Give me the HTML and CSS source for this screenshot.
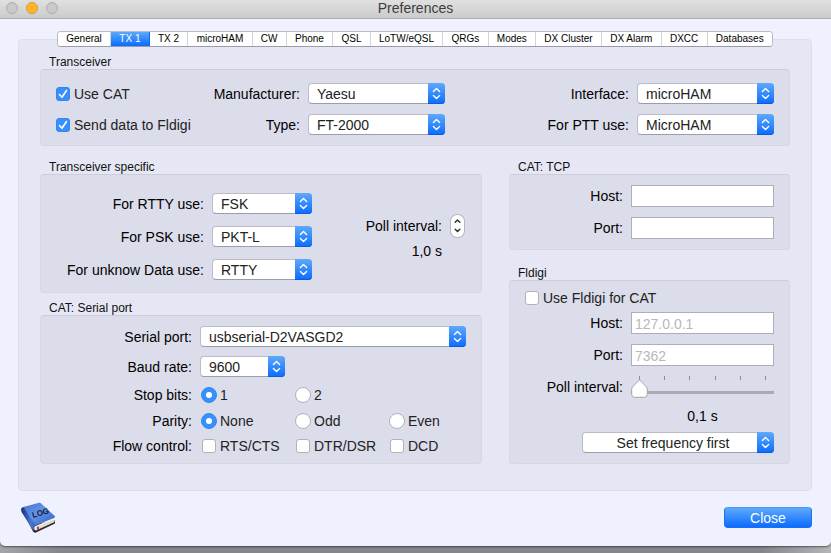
FILE: index.html
```html
<!DOCTYPE html>
<html lang="en">
<head>
<meta charset="utf-8">
<title>Preferences</title>
<link rel="stylesheet" href="styles.css">
</head>
<body>
<svg class="defs" aria-hidden="true">
  <symbol id="updown" viewBox="0 0 17 21">
    <path d="M5.4 8.6 8.5 5.6l3.1 3M5.4 12.6l3.1 3 3.1-3" fill="none" stroke="#fff" stroke-width="1.4" stroke-linecap="round" stroke-linejoin="round"/>
  </symbol>
</svg>
<div class="window">
  <header class="titlebar">
    <div class="lights">
      <button class="light" aria-label="Close window"></button>
      <button class="light light-min" aria-label="Minimize"></button>
      <button class="light" aria-label="Zoom"></button>
    </div>
    <h1 class="title">Preferences</h1>
  </header>

  <main class="content">
    <nav class="tabs" role="tablist">
      <button class="tab" role="tab">General</button>
      <button class="tab tab-on" role="tab" aria-selected="true">TX 1</button>
      <button class="tab" role="tab">TX 2</button>
      <button class="tab" role="tab">microHAM</button>
      <button class="tab" role="tab">CW</button>
      <button class="tab" role="tab">Phone</button>
      <button class="tab" role="tab">QSL</button>
      <button class="tab" role="tab">LoTW/eQSL</button>
      <button class="tab" role="tab">QRGs</button>
      <button class="tab" role="tab">Modes</button>
      <button class="tab" role="tab">DX Cluster</button>
      <button class="tab" role="tab">DX Alarm</button>
      <button class="tab" role="tab">DXCC</button>
      <button class="tab" role="tab">Databases</button>
    </nav>

    <div class="panel">
      <fieldset class="group">
        <legend>Transceiver</legend>
        <div class="box transceiver">
          <label class="choice"><input type="checkbox" checked>Use CAT</label>
          <label class="name" for="maker">Manufacturer:</label>
          <span class="popup"><select id="maker"><option>Yaesu</option></select><svg class="arrows"><use href="#updown"/></svg></span>
          <label class="name" for="iface">Interface:</label>
          <span class="popup"><select id="iface"><option>microHAM</option></select><svg class="arrows"><use href="#updown"/></svg></span>
          <label class="choice"><input type="checkbox" checked>Send data to Fldigi</label>
          <label class="name" for="type">Type:</label>
          <span class="popup"><select id="type"><option>FT-2000</option></select><svg class="arrows"><use href="#updown"/></svg></span>
          <label class="name" for="ptt">For PTT use:</label>
          <span class="popup"><select id="ptt"><option>MicroHAM</option></select><svg class="arrows"><use href="#updown"/></svg></span>
        </div>
      </fieldset>

      <div class="columns">
        <div class="column">
          <fieldset class="group">
            <legend>Transceiver specific</legend>
            <div class="box specific">
              <div class="modes">
                <label class="name" for="rtty">For RTTY use:</label>
                <span class="popup"><select id="rtty"><option>FSK</option></select><svg class="arrows"><use href="#updown"/></svg></span>
                <label class="name" for="psk">For PSK use:</label>
                <span class="popup"><select id="psk"><option>PKT-L</option></select><svg class="arrows"><use href="#updown"/></svg></span>
                <label class="name" for="data">For unknow Data use:</label>
                <span class="popup"><select id="data"><option>RTTY</option></select><svg class="arrows"><use href="#updown"/></svg></span>
              </div>
              <div class="poll">
                <span class="name">Poll interval:</span>
                <button class="stepper" aria-label="Change poll interval">
                  <svg viewBox="0 0 13 22" width="13" height="22"><path d="M4.200 7.300 6.500 5l2.300 2.300M4.200 14.200l2.300 2.300 2.300-2.300" fill="none" stroke="#333" stroke-width="1.500" stroke-linecap="round" stroke-linejoin="round"/></svg>
                </button>
                <output class="name">1,0 s</output>
              </div>
            </div>
          </fieldset>

          <fieldset class="group">
            <legend>CAT: Serial port</legend>
            <div class="box serial">
              <label class="name" for="port">Serial port:</label>
              <span class="popup wide"><select id="port"><option>usbserial-D2VASGD2</option></select><svg class="arrows"><use href="#updown"/></svg></span>
              <label class="name" for="baud">Baud rate:</label>
              <span class="popup baud"><select id="baud"><option>9600</option></select><svg class="arrows"><use href="#updown"/></svg></span>
              <span class="name">Stop bits:</span>
              <label class="choice"><input type="radio" name="stop" checked>1</label>
              <label class="choice"><input type="radio" name="stop">2</label>
              <span class="name row-start">Parity:</span>
              <label class="choice"><input type="radio" name="parity" checked>None</label>
              <label class="choice"><input type="radio" name="parity">Odd</label>
              <label class="choice"><input type="radio" name="parity">Even</label>
              <span class="name row-start">Flow control:</span>
              <label class="choice"><input type="checkbox">RTS/CTS</label>
              <label class="choice"><input type="checkbox">DTR/DSR</label>
              <label class="choice"><input type="checkbox">DCD</label>
            </div>
          </fieldset>
        </div>

        <div class="column column-right">
          <fieldset class="group">
            <legend>CAT: TCP</legend>
            <div class="box tcp">
              <label class="name" for="host">Host:</label>
              <input class="field" type="text" id="host">
              <label class="name" for="tcpport">Port:</label>
              <input class="field" type="text" id="tcpport">
            </div>
          </fieldset>

          <fieldset class="group">
            <legend>Fldigi</legend>
            <div class="box fldigi">
              <label class="choice"><input type="checkbox">Use Fldigi for CAT</label>
              <div class="fields">
                <label class="name" for="fhost">Host:</label>
                <input class="field" type="text" id="fhost" placeholder="127.0.0.1">
                <label class="name" for="fport">Port:</label>
                <input class="field" type="text" id="fport" placeholder="7362">
                <label class="name" for="fpoll">Poll interval:</label>
                <div class="slider">
                  <div class="ticks"><i></i><i></i><i></i><i></i><i></i><i></i></div>
                  <input type="range" id="fpoll" min="0" max="5" value="0">
                </div>
                <output class="reading" for="fpoll">0,1 s</output>
              </div>
              <span class="popup order"><select aria-label="Order"><option>Set frequency first</option></select><svg class="arrows"><use href="#updown"/></svg></span>
            </div>
          </fieldset>
        </div>
      </div>
    </div>

    <footer class="footer">
      <svg class="book" viewBox="0 0 36 32" width="36" height="32" role="img" aria-label="Log book">
        <defs>
          <linearGradient id="cover" x1="0" y1="0" x2="1" y2="1"><stop offset="0" stop-color="#3f72cf"/><stop offset=".45" stop-color="#6494ea"/><stop offset="1" stop-color="#2f5fc0"/></linearGradient>
          <linearGradient id="spine" x1="0" y1="0" x2="1" y2="0"><stop offset="0" stop-color="#16306f"/><stop offset=".6" stop-color="#4778d2"/><stop offset="1" stop-color="#2854ac"/></linearGradient>
        </defs>
        <path d="M1 8 12 29.500q1 1.500 3 1L34 21.500v-3L14 22z" fill="#23262f"/>
        <path d="M13 24.500 33 16.500l.5 3.500L15 28.500q-2 0-2-4z" fill="#f3f0e6"/>
        <path d="M14.500 26.200 33 18.300M15 27.500 33 19.600" stroke="#b9b5aa" stroke-width=".5"/>
        <path d="M0 7Q.5 5 3.500 4.800L16.500 23Q12 24.500 13 29 12 28.500 11.500 27.500L.5 10z" fill="url(#spine)"/>
        <path d="M2.500 5 18 .7q1.500-.3 2.200.8L33.700 14q.8 1.300-.7 2L14.500 23.200z" fill="url(#cover)"/>
        <path d="M16 25l.3 3.500 1-1.200 1 .5-.7-3.500z" fill="#d2222f"/>
        <text class="book-text" x="12" y="16" transform="rotate(-17 12 16)">LOG</text>
      </svg>
      <button class="close">Close</button>
    </footer>
  </main>
</div>
</body>
</html>
```
FILE: styles.css
```css
* { box-sizing: border-box; }

body {
  margin: 0;
  min-height: 100vh;
  background: linear-gradient(90deg, #a3a6a8 0, #84878a 60px, #84878a calc(100% - 70px), #b4b6b8 100%);
  font: 14px/16px "Liberation Sans", Arial, sans-serif;
  color: #111;
}

button, input, select { font: inherit; color: inherit; margin: 0; }

.defs { position: absolute; width: 0; height: 0; }

.window {
  background: #f0f1ff;
  border-radius: 0 0 5px 5px;
  box-shadow: 0 1px 2px rgba(0, 0, 0, .5);
  overflow: hidden;
}

.titlebar {
  display: grid;
  grid-template-columns: 1fr auto 1fr;
  align-items: center;
  height: 19px;
  padding: 0 6px 2px;
  background: linear-gradient(#e0e0e0, #cbcbcb);
  border-bottom: 1px solid #adadad;
}

.lights { display: flex; gap: 8px; }

.light {
  width: 12px;
  height: 12px;
  padding: 0;
  border: 1px solid #aeaeae;
  border-radius: 50%;
  background: #c9c9c9;
}

.light-min { background: #ffb429; border-color: #de9a2a; }

.title { margin: 0; font-size: 14px; font-weight: 400; color: #3c3c3c; }

.content { padding: 12px 19px 15px 18px; }

.tabs {
  position: relative;
  display: flex;
  margin: 0 39px -8px;
  height: 16px;
  border: 1px solid #bcbcc8;
  border-bottom-color: #9c9ca8;
  border-radius: 4px;
  background: #fff;
  overflow: hidden;
}

.tab {
  flex: 1 1 auto;
  padding: 0;
  border: 0;
  border-right: 1px solid #d4d4d8;
  background: #fff;
  font-size: 10px;
  line-height: 14px;
  color: #000;
}

.tab:last-child { border-right: 0; }

.tab-on {
  background: linear-gradient(#5aa9fb, #0a6cff);
  border-color: #0a6cff;
  color: #fff;
}

.panel {
  padding: 15px 21px 26px;
  border: 1px solid #dddfec;
  border-radius: 4px;
  background: #e5e7f4;
}

.group { margin: 0; padding: 0; border: 0; min-width: 0; }

legend {
  display: block;
  padding: 0 9px;
  font-size: 12px;
  line-height: 14px;
}

.box {
  border: 1px solid #d6d7e3;
  border-top-color: #cccdd9;
  border-radius: 4px;
  background: #dcddea;
}

.name { text-align: right; white-space: nowrap; color: #000; }

.columns {
  display: grid;
  grid-template-columns: 442fr 281fr;
  gap: 27px;
  margin-top: 14px;
}

.column { display: flex; flex-direction: column; gap: 8px; }
.column-right { gap: 16px; }

.transceiver {
  display: grid;
  grid-template-columns: 148px 88px 137px 1fr 137px;
  gap: 10px 8px;
  align-items: center;
  padding: 13px 15px 10px;
}

.specific {
  display: flex;
  justify-content: space-between;
  align-items: center;
  padding: 18px 17px 12px 20px;
}

.modes {
  display: grid;
  grid-template-columns: 143px 100px;
  gap: 12px 8px;
  align-items: center;
}

.poll {
  display: grid;
  grid-template-columns: auto 13px;
  gap: 6px 9px;
  align-items: center;
}

.stepper {
  width: 13px;
  height: 22px;
  padding: 0;
  border: 0;
  border-radius: 6px;
  background: #fff;
  box-shadow: 0 0 0 1px #b5b6c1;
}

.stepper svg { display: block; }

.serial {
  display: grid;
  grid-template-columns: 151px 86px 86px 1fr;
  grid-template-rows: 21px 21px 18px 16px 16px;
  gap: 9px 8px;
  align-items: center;
  padding: 10px 15px 9px 0;
}

.wide, .baud { grid-column: 2 / -1; }
.baud { width: 85px; }
.row-start { grid-column: 1; }

.tcp, .fields {
  display: grid;
  grid-template-columns: 1fr 143px;
  gap: 10px 8px;
  align-items: center;
}

.tcp { padding: 10px 15px; }

.fldigi { padding: 9px 15px 10px; }
.fields { margin-top: 6px; }

.reading { grid-column: 2; text-align: center; color: #000; }
.order { width: 192px; margin: 8px 0 0 auto; }
.order select { text-align-last: center; }

.popup { position: relative; display: block; }

.popup select {
  appearance: none;
  display: block;
  width: 100%;
  height: 21px;
  padding: 0 18px 0 8px;
  border: 1px solid #bbbcc6;
  border-bottom-color: #9c9da8;
  border-radius: 4px;
  background: #fff;
  color: #222;
}

.arrows {
  position: absolute;
  top: 0;
  right: 0;
  width: 17px;
  height: 21px;
  border-radius: 0 4px 4px 0;
  background: linear-gradient(#5fa9fa, #0a6cff);
  box-shadow: inset 0 -1px #0a5be0;
  pointer-events: none;
}

.choice { display: flex; align-items: center; gap: 4px; white-space: nowrap; color: #222; }
.serial .choice { gap: 3px; padding-left: 1px; }

input[type="checkbox"], input[type="radio"] {
  appearance: none;
  flex: none;
  display: grid;
  place-items: center;
  border: 1px solid #b0b1bb;
  background: #fff;
}

input[type="checkbox"] { width: 14px; height: 14px; border-radius: 3px; }
.serial input[type="checkbox"] { margin: 0 1px; }
input[type="radio"] { width: 16px; height: 16px; border-radius: 50%; }

input[type="checkbox"]:checked, input[type="radio"]:checked {
  background-color: #3890fb;
  border-color: #3088f5;
}

input[type="checkbox"]:checked {
  background-image: url("data:image/svg+xml,%3Csvg xmlns='http://www.w3.org/2000/svg' width='12' height='12'%3E%3Cpath d='M2.500 6.500 5 9.200 9.500 2.500' fill='none' stroke='%23fff' stroke-width='1.600' stroke-linecap='round' stroke-linejoin='round'/%3E%3C/svg%3E");
  background-repeat: no-repeat;
}

input[type="radio"]:checked::before {
  content: "";
  width: 6px;
  height: 6px;
  border-radius: 50%;
  background: #fff;
}

.field {
  width: 100%;
  height: 22px;
  padding: 2px 3px 0;
  border: 1px solid #adaebb;
  border-radius: 0;
  background: #fff;
}

.field::placeholder { color: #b8b8b8; }

.slider { display: flex; flex-direction: column; height: 22px; }

.ticks { display: flex; justify-content: space-between; padding: 0 8px; height: 4px; }
.ticks i { width: 1px; background: #8c8d98; }

.slider input {
  appearance: none;
  display: block;
  width: 100%;
  height: 18px;
  margin-top: -1px;
  background: linear-gradient(#a9aab5, #a9aab5) 0 12px / 100% 3px no-repeat;
}

.slider input::-webkit-slider-thumb {
  appearance: none;
  width: 17px;
  height: 19px;
  background: url("data:image/svg+xml,%3Csvg xmlns='http://www.w3.org/2000/svg' width='17' height='19'%3E%3Cpath d='M8.500 .8 15.500 8q.8 1 .8 2v5.500q0 2.800-2.800 2.800h-10q-2.800 0-2.800-2.800V10q0-1 .8-2z' fill='%23fff' stroke='%23a3a4af'/%3E%3C/svg%3E") no-repeat;
}

.footer {
  display: flex;
  justify-content: space-between;
  align-items: center;
  padding: 13px 0 0 3px;
  height: 40px;
}

.book { flex: none; }
.book-text { font: bold 8px "Liberation Sans", Arial, sans-serif; fill: #10182c; }

.close {
  width: 88px;
  height: 21px;
  padding: 0;
  border: 1px solid #1a70f0;
  border-top-color: #4a94f4;
  border-radius: 4px;
  background: linear-gradient(#5fa9fa, #0a6cff);
  color: #fff;
}
```
